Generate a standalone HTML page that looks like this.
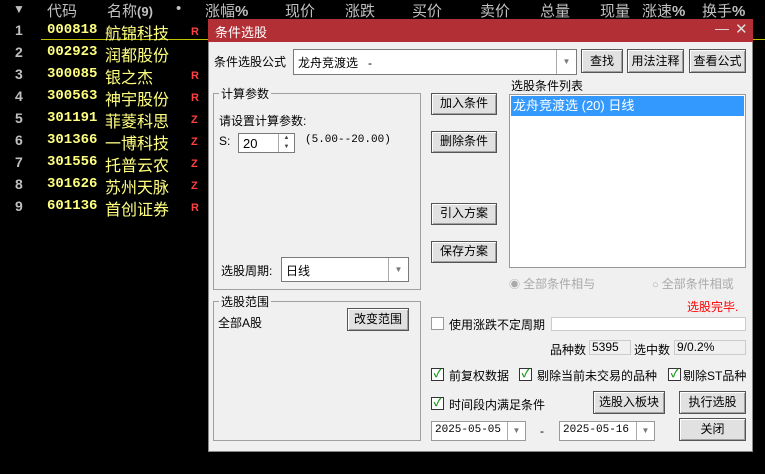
<!DOCTYPE html>
<html><head><meta charset="utf-8"><style>
*{margin:0;padding:0;box-sizing:border-box}
body{width:765px;height:474px;background:#000;position:relative;overflow:hidden;font-family:"Liberation Sans","Noto Sans CJK SC",sans-serif;font-size:13px}
.a{position:absolute;white-space:nowrap}
.h{color:#c0c0c0;font-size:15px;top:0}
.n{color:#c0c0c0;font-size:14px;font-weight:bold;left:15px}
.c{color:#ffff80;font-size:14px;font-weight:bold;left:47px;font-family:"Liberation Mono",monospace}
.m{color:#ffff80;font-size:16px;left:105px}
.f{color:#ff4040;font-size:11px;font-weight:bold;left:191px}
.d{color:#000;font-size:12px}
.btn{position:absolute;background:#e1e1e1;border:1px solid #555;box-shadow:inset 1px 1px #fff,inset -1px -1px #a0a0a0;text-align:center;font-size:12px;line-height:19px}
.box{position:absolute;background:#fff;border:1px solid #7a7a7a}
.grp{position:absolute;border:1px solid #a0a0a0}
.lbl{position:absolute;background:#f0f0f0;padding:0 2px;font-size:12px;white-space:nowrap}
.cb{position:absolute;width:13px;height:13px;border:1px solid #333;background:#fff;font-size:11px;color:#1a9a1a;line-height:11px;text-align:center;font-weight:bold}
.dd{position:absolute;right:0;top:0;bottom:0;width:20px;border-left:1px solid #aaa;color:#777;font-size:8px;text-align:center}
</style></head><body>
<div class="a h" style="left:13px;font-size:12px;top:2px">▼</div>
<div class="a h" style="left:47px">代码</div>
<div class="a h" style="left:107px">名称<b style="font-size:13px">(9)</b></div>
<div class="a h" style="left:176px">•</div>
<div class="a h" style="left:205px">涨幅<b>%</b></div>
<div class="a h" style="left:285px">现价</div>
<div class="a h" style="left:345px">涨跌</div>
<div class="a h" style="left:412px">买价</div>
<div class="a h" style="left:480px">卖价</div>
<div class="a h" style="left:540px">总量</div>
<div class="a h" style="left:600px">现量</div>
<div class="a h" style="left:642px">涨速<b>%</b></div>
<div class="a h" style="left:702px">换手<b>%</b></div>
<div class="a" style="left:41px;top:39px;width:167px;height:1px;background:#c0c000"></div>
<div class="a" style="left:753px;top:39px;width:12px;height:1px;background:#c0c000"></div>

<div class="a n" style="top:22px">1</div><div class="a c" style="top:22px">000818</div><div class="a m" style="top:20px">航锦科技</div><div class="a f" style="top:26px">R</div>
<div class="a n" style="top:44px">2</div><div class="a c" style="top:44px">002923</div><div class="a m" style="top:42px">润都股份</div>
<div class="a n" style="top:66px">3</div><div class="a c" style="top:66px">300085</div><div class="a m" style="top:64px">银之杰</div><div class="a f" style="top:70px">R</div>
<div class="a n" style="top:88px">4</div><div class="a c" style="top:88px">300563</div><div class="a m" style="top:86px">神宇股份</div><div class="a f" style="top:92px">R</div>
<div class="a n" style="top:110px">5</div><div class="a c" style="top:110px">301191</div><div class="a m" style="top:108px">菲菱科思</div><div class="a f" style="top:114px">Z</div>
<div class="a n" style="top:132px">6</div><div class="a c" style="top:132px">301366</div><div class="a m" style="top:130px">一博科技</div><div class="a f" style="top:136px">Z</div>
<div class="a n" style="top:154px">7</div><div class="a c" style="top:154px">301556</div><div class="a m" style="top:152px">托普云农</div><div class="a f" style="top:158px">Z</div>
<div class="a n" style="top:176px">8</div><div class="a c" style="top:176px">301626</div><div class="a m" style="top:174px">苏州天脉</div><div class="a f" style="top:180px">Z</div>
<div class="a n" style="top:198px">9</div><div class="a c" style="top:198px">601136</div><div class="a m" style="top:196px">首创证券</div><div class="a f" style="top:202px">R</div>

<div class="a" style="left:208px;top:19px;width:545px;height:433px;background:#f0f0f0;border:1px solid #888">
<div class="a" style="left:-1px;top:-1px;width:545px;height:23px;background:#b22f35"></div>
<div class="a" style="left:6px;top:2px;color:#fff;font-size:13px">条件选股</div>
<div class="a" style="left:506px;top:0px;color:#ddd;font-size:14px">—</div>
<div class="a" style="left:526px;top:0px;color:#ddd;font-size:15px">✕</div>
</div>
<div class="a d" style="left:214px;top:53px">条件选股公式</div>
<div class="box" style="left:293px;top:49px;width:284px;height:26px"><span class="a d" style="left:4px;top:4px">龙舟竞渡选&nbsp;&nbsp;&nbsp;-</span><div class="dd" style="line-height:24px">▼</div></div>
<div class="btn" style="left:581px;top:49px;width:42px;height:24px;line-height:22px">查找</div>
<div class="btn" style="left:627px;top:49px;width:57px;height:24px;line-height:22px">用法注释</div>
<div class="btn" style="left:689px;top:49px;width:57px;height:24px;line-height:22px">查看公式</div>

<div class="grp" style="left:213px;top:93px;width:208px;height:197px"></div>
<div class="lbl" style="left:219px;top:85px">计算参数</div>
<div class="a d" style="left:219px;top:112px">请设置计算参数:</div>
<div class="a d" style="left:219px;top:134px">S:</div>
<div class="box" style="left:238px;top:133px;width:57px;height:20px"><span class="a d" style="left:4px;top:2px;font-size:13px">20</span><div class="a" style="left:39px;top:0;width:16px;height:18px;border-left:1px solid #aaa;font-size:6px;color:#444;text-align:center;line-height:9px">▲<br>▼</div></div>
<div class="a d" style="left:305px;top:134px;font-family:'Liberation Mono',monospace;font-size:11px">(5.00--20.00)</div>
<div class="a d" style="left:221px;top:262px">选股周期:</div>
<div class="box" style="left:281px;top:257px;width:128px;height:25px"><span class="a d" style="left:4px;top:4px">日线</span><div class="dd" style="line-height:23px">▼</div></div>

<div class="btn" style="left:431px;top:93px;width:66px;height:22px">加入条件</div>
<div class="btn" style="left:431px;top:131px;width:66px;height:22px">删除条件</div>
<div class="btn" style="left:431px;top:203px;width:66px;height:22px">引入方案</div>
<div class="btn" style="left:431px;top:241px;width:66px;height:22px">保存方案</div>

<div class="a d" style="left:511px;top:77px">选股条件列表</div>
<div class="box" style="left:509px;top:94px;width:237px;height:174px;border-color:#999"><div class="a" style="left:1px;top:1px;width:233px;height:20px;background:#3399ff;color:#fff;font-size:13px;padding-left:2px;line-height:20px">龙舟竞渡选 (20) 日线</div></div>
<div class="a" style="left:509px;top:275px;color:#aaa;font-size:11px">◉ <span style="font-size:12px">全部条件相与</span></div>
<div class="a" style="left:652px;top:275px;color:#aaa;font-size:11px">○ <span style="font-size:12px">全部条件相或</span></div>

<div class="grp" style="left:213px;top:301px;width:208px;height:140px"></div>
<div class="lbl" style="left:219px;top:293px">选股范围</div>
<div class="a d" style="left:218px;top:314px">全部A股</div>
<div class="btn" style="left:347px;top:308px;width:62px;height:23px;line-height:21px">改变范围</div>

<div class="a" style="left:687px;top:298px;color:#f00;font-size:12px">选股完毕.</div>
<div class="cb" style="left:431px;top:317px;border-color:#999"></div>
<div class="a d" style="left:449px;top:316px">使用涨跌不定周期</div>
<div class="box" style="left:551px;top:317px;width:195px;height:14px;border-color:#ccc"></div>
<div class="a d" style="left:550px;top:341px">品种数</div>
<div class="a" style="left:589px;top:340px;width:42px;height:15px;border:1px solid #ccc;font-size:12px;padding-left:2px;line-height:13px">5395</div>
<div class="a d" style="left:634px;top:341px">选中数</div>
<div class="a" style="left:674px;top:340px;width:72px;height:15px;border:1px solid #ccc;font-size:12px;padding-left:2px;line-height:13px">9/0.2%</div>

<div class="cb" style="left:431px;top:368px">✓</div><div class="a d" style="left:449px;top:367px">前复权数据</div>
<div class="cb" style="left:519px;top:368px">✓</div><div class="a d" style="left:537px;top:367px">剔除当前未交易的品种</div>
<div class="cb" style="left:668px;top:368px">✓</div><div class="a d" style="left:683px;top:367px">剔除ST品种</div>
<div class="cb" style="left:431px;top:397px">✓</div><div class="a d" style="left:449px;top:396px">时间段内满足条件</div>
<div class="btn" style="left:593px;top:391px;width:72px;height:23px;line-height:21px">选股入板块</div>
<div class="btn" style="left:679px;top:391px;width:67px;height:23px;line-height:21px">执行选股</div>
<div class="btn" style="left:679px;top:418px;width:67px;height:23px;line-height:21px">关闭</div>
<div class="box" style="left:431px;top:421px;width:95px;height:20px;border-color:#999"><span class="a" style="left:3px;top:2px;font-size:11px;font-family:'Liberation Mono',monospace">2025-05-05</span><div class="dd" style="line-height:18px;width:18px">▼</div></div>
<div class="a d" style="left:540px;top:424px">-</div>
<div class="box" style="left:559px;top:421px;width:96px;height:20px;border-color:#999"><span class="a" style="left:3px;top:2px;font-size:11px;font-family:'Liberation Mono',monospace">2025-05-16</span><div class="dd" style="line-height:18px;width:18px">▼</div></div>
</body></html>
